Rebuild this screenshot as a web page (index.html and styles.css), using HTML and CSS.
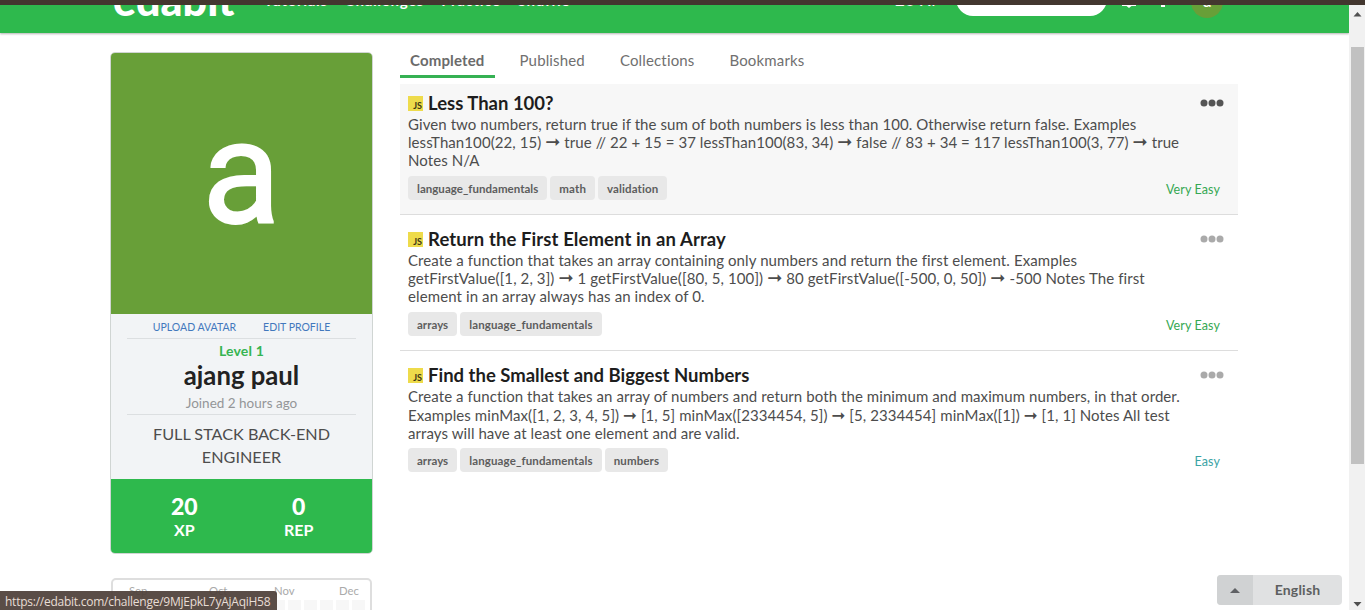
FILE: index.html
```html
<!DOCTYPE html>
<html lang="en">
<head>
<meta charset="utf-8">
<title>edabit</title>
<link rel="stylesheet" href="styles.css">
</head>
<body>
<div class="chrome-edge"></div>
<div class="viewport">
  <div class="page">
    <header class="header">
      <span class="logo">edabit</span>
      <nav class="nav"><span>Tutorials</span><span>Challenges</span><span>Practice</span><span>Shuffle</span></nav>
      <span class="xp">20 XP</span>
      <span class="search"></span>
      <svg class="bell" width="16" height="5" viewBox="0 0 16 5"><path d="M1 0h14v1H1zM5.500 1h5L8 3z" fill="#fff"/></svg>
      <span class="divider"></span>
      <span class="user">a</span>
    </header>
    <main class="content">
      <aside class="side">
        <section class="card">
          <div class="avatar">a</div>
          <div class="info">
            <div class="links"><a>UPLOAD AVATAR</a><a>EDIT PROFILE</a></div>
            <div class="identity">
              <div class="level">Level 1</div>
              <h2 class="name">ajang paul</h2>
              <div class="joined">Joined 2 hours ago</div>
            </div>
            <p class="bio">FULL STACK BACK-END<br>ENGINEER</p>
          </div>
          <div class="stats">
            <div class="stat"><b>20</b><span>XP</span></div>
            <div class="stat"><b>0</b><span>REP</span></div>
          </div>
        </section>
        <section class="calendar">
          <div class="months"><span>Sep</span><span>Oct</span><span>Nov</span><span>Dec</span></div>
          <div class="cells"><i></i><i></i><i></i><i></i><i></i><i></i><i></i><i></i><i></i><i></i><i></i><i></i><i></i><i></i><i></i></div>
        </section>
      </aside>
      <div class="feed">
        <nav class="tabs"><a class="tab active">Completed</a><a class="tab">Published</a><a class="tab">Collections</a><a class="tab">Bookmarks</a></nav>
        <article class="item hovered">
          <div class="heading"><span class="js">JS</span><h3 class="title">Less Than 100?</h3><svg class="dots" width="24" height="8"><circle cx="4" cy="4" r="3.500"/><circle cx="12" cy="4" r="3.500"/><circle cx="20" cy="4" r="3.500"/></svg></div>
          <p class="text">Given two numbers, return true if the sum of both numbers is less than 100. Otherwise return false. Examples<br>lessThan100(22, 15) <span class="arrow">➞</span> true // 22 + 15 = 37 lessThan100(83, 34) <span class="arrow">➞</span> false // 83 + 34 = 117 lessThan100(3, 77) <span class="arrow">➞</span> true<br>Notes N/A</p>
          <div class="meta"><span class="tag">language_fundamentals</span><span class="tag">math</span><span class="tag">validation</span><span class="level-tag very-easy">Very Easy</span></div>
        </article>
        <article class="item">
          <div class="heading"><span class="js">JS</span><h3 class="title wide">Return the First Element in an Array</h3><svg class="dots" width="24" height="8"><circle cx="4" cy="4" r="3.500"/><circle cx="12" cy="4" r="3.500"/><circle cx="20" cy="4" r="3.500"/></svg></div>
          <p class="text wide">Create a function that takes an array containing only numbers and return the first element. Examples<br>getFirstValue([1, 2, 3]) <span class="arrow">➞</span> 1 getFirstValue([80, 5, 100]) <span class="arrow">➞</span> 80 getFirstValue([-500, 0, 50]) <span class="arrow">➞</span> -500 Notes The first<br>element in an array always has an index of 0.</p>
          <div class="meta"><span class="tag">arrays</span><span class="tag">language_fundamentals</span><span class="level-tag very-easy">Very Easy</span></div>
        </article>
        <article class="item">
          <div class="heading"><span class="js">JS</span><h3 class="title">Find the Smallest and Biggest Numbers</h3><svg class="dots" width="24" height="8"><circle cx="4" cy="4" r="3.500"/><circle cx="12" cy="4" r="3.500"/><circle cx="20" cy="4" r="3.500"/></svg></div>
          <p class="text">Create a function that takes an array of numbers and return both the minimum and maximum numbers, in that order.<br>Examples minMax([1, 2, 3, 4, 5]) <span class="arrow">➞</span> [1, 5] minMax([2334454, 5]) <span class="arrow">➞</span> [5, 2334454] minMax([1]) <span class="arrow">➞</span> [1, 1] Notes All test<br>arrays will have at least one element and are valid.</p>
          <div class="meta"><span class="tag">arrays</span><span class="tag">language_fundamentals</span><span class="tag">numbers</span><span class="level-tag easy">Easy</span></div>
        </article>
      </div>
    </main>
  </div>
  <div class="scrollbar">
    <svg width="9" height="5" viewBox="0 0 9 5"><path d="M.5 4.500 4.500 0l4 4.500z" fill="#505050"/></svg>
    <div class="thumb"></div>
    <svg class="down" width="9" height="5" viewBox="0 0 9 5"><path d="M.5 0h8l-4 4.500z" fill="#505050"/></svg>
  </div>
</div>
<div class="status">https://edabit.com/challenge/9MjEpkL7yAjAqiH58</div>
<div class="language"><span class="caret"><svg width="10" height="5" viewBox="0 0 8 4"><path d="M0 4 4 0l4 4z" fill="#5f6164"/></svg></span><span class="lang-name">English</span></div>
</body>
</html>
```
FILE: styles.css
```css
* { box-sizing: border-box; }
body { margin: 0; width: 1365px; height: 610px; overflow: hidden; background: #fff; font-family: Lato, "DejaVu Sans", sans-serif; color: #4d4d4d; }
h2, h3, p { margin: 0; }
.chrome-edge { height: 5px; background: #43372f; }
.viewport { display: flex; height: 605px; }
.page { width: 1349px; height: 605px; overflow: hidden; }

.header { display: flex; align-items: flex-start; height: 28px; padding-left: 113px; background: #2eb94d; box-shadow: 0 1px 2px rgba(0,0,0,.3); color: #fff; overflow: hidden; }
.header > * { flex: none; }
.logo { width: 151px; margin-top: -29px; font: 900 43px/48px Lato, sans-serif; white-space: nowrap; }
.nav { display: flex; gap: 17px; width: 631px; margin-top: -14px; font-size: 15px; line-height: 18px; font-weight: 700; letter-spacing: .7px; }
.xp { width: 61px; margin-top: -15px; font-size: 17px; line-height: 20px; letter-spacing: .2px; }
.search { width: 151px; height: 34px; margin-top: -23px; background: #fff; border-radius: 17px; }
.bell { margin-left: 14px; }
.divider { width: 4px; height: 2px; margin: 0 26px 0 24px; background: #fff; }
.user { width: 32px; height: 32px; margin-top: -19px; border-radius: 50%; background: #689f38; text-align: center; font: 400 17px/30px Roboto, sans-serif; }

.content { display: flex; gap: 27px; padding: 19px 0 0 110px; }
.side { width: 263px; flex: none; }
.card { height: 502px; border: 1px solid #d0d5d3; border-radius: 5px; overflow: hidden; background: #f2f4f6; }
.avatar { height: 261px; background: #689f38; color: #fff; text-align: center; font: 400 144px/241px Roboto, sans-serif; -webkit-text-stroke: 2px #fff; }
.info { height: 165px; padding: 0 16px; text-align: center; }
.links { display: flex; justify-content: center; gap: 27px; height: 25px; border-bottom: 1px solid #dcdfe1; color: #4278bd; font-size: 10.500px; line-height: 27px; }
.identity { height: 76px; border-bottom: 1px solid #dcdfe1; }
.level { padding-top: 2px; font-size: 14px; line-height: 19px; font-weight: 700; color: #36b452; letter-spacing: .2px; }
.name { font-size: 25.700px; line-height: 30px; color: #222; }
.joined { font-size: 13.500px; line-height: 26px; color: #949698; }
.bio { padding-top: 7px; font-size: 16.200px; line-height: 23px; }
.stats { display: flex; height: 74px; padding: 14px 16px 0; background: #2eb94d; color: #fff; }
.stat { flex: 1; display: flex; flex-direction: column; align-items: center; font-weight: 700; }
.stat b { font-size: 23px; line-height: 26px; }
.stat span { font-size: 16px; line-height: 22px; }
.calendar { height: 140px; margin: 24px 1px 0 1px; border: 2px solid #dedede; border-radius: 5px; background: #fff; }
.months { display: grid; grid-template-columns: 80px 65px 65px 35px; padding-left: 16px; height: 20px; font-size: 11.300px; line-height: 22px; color: #aaa; }
.cells { display: flex; gap: 3px; padding-left: 15px; overflow: hidden; }
.cells i { flex: none; width: 13px; height: 13px; background: #f7f7f7; }

.feed { width: 838px; }
.tabs { display: flex; gap: 15px; height: 32px; margin-top: -6px; }
.tab { height: 32px; padding: 0 10px; font-size: 15px; line-height: 28px; color: #707070; border-bottom: 3px solid transparent; letter-spacing: .15px; }
.tab.active { font-weight: 700; border-color: #35b153; color: #6b6b6b; }
.item { height: 136px; padding: 13px 14px 0 8px; border-bottom: 1px solid #ddd; }
.item.hovered { height: 131px; margin-top: 6px; padding-top: 8px; background: #f7f7f7; }
.item:last-child { border: 0; }
.heading { display: flex; align-items: center; height: 22px; }
.js { width: 15px; height: 15px; margin-right: 5px; padding: 4px 1px 0 0; background: #eedb4b; color: #3b3616; font: 700 9px/12px Lato, sans-serif; text-align: right; }
.title { font-size: 18.500px; line-height: 22px; color: #1d1d1d; }
.title.wide { letter-spacing: .1px; }
.dots { margin-left: auto; fill: #aaa; }
.hovered .dots { fill: #555; }
.text { height: 62px; padding-top: 1px; font-size: 15px; line-height: 18.200px; white-space: nowrap; letter-spacing: .08px; }
.text.wide { letter-spacing: .105px; }
.item:last-child .text { line-height: 18.500px; }
.arrow { font-size: 18px; line-height: 0; }
.item:last-child .arrow { font-size: 16.500px; }
.meta { display: flex; gap: 3px; align-items: center; height: 24px; }
.tag { height: 24px; padding: 0 9px; border-radius: 4px; background: #e8e8e8; color: #5d5d5d; font-size: 11.500px; font-weight: 700; line-height: 25px; letter-spacing: .13px; }
.tag:first-child { letter-spacing: .03px; }
.level-tag { margin: 2px 4px 0 auto; font-size: 12.500px; letter-spacing: .1px; }
.very-easy { color: #36a853; }
.easy { color: #3ba3a5; }

.scrollbar { display: flex; flex-direction: column; align-items: center; width: 16px; padding: 7px 0 3px; background: #f1f1f1; }
.thumb { width: 13px; height: 417px; margin-top: 30px; background: #c1c1c1; }
.down { margin-top: auto; }
.status { position: absolute; left: 0; top: 591px; width: 277px; height: 19px; padding-left: 5px; background: rgba(77,64,57,.93); border-top-right-radius: 3px; color: #e8ddd5; font: 12px/21px "Open Sans", sans-serif; letter-spacing: -.25px; white-space: nowrap; }
.language { position: absolute; left: 1217px; top: 575px; display: flex; width: 125px; height: 30px; border-radius: 4px; overflow: hidden; background: #e0e1e2; color: #5d5f61; }
.caret { display: flex; align-items: center; justify-content: center; width: 36px; background: #d0d2d3; }
.lang-name { flex: 1; text-align: center; font-size: 14px; line-height: 30px; font-weight: 700; letter-spacing: .2px; }
```
